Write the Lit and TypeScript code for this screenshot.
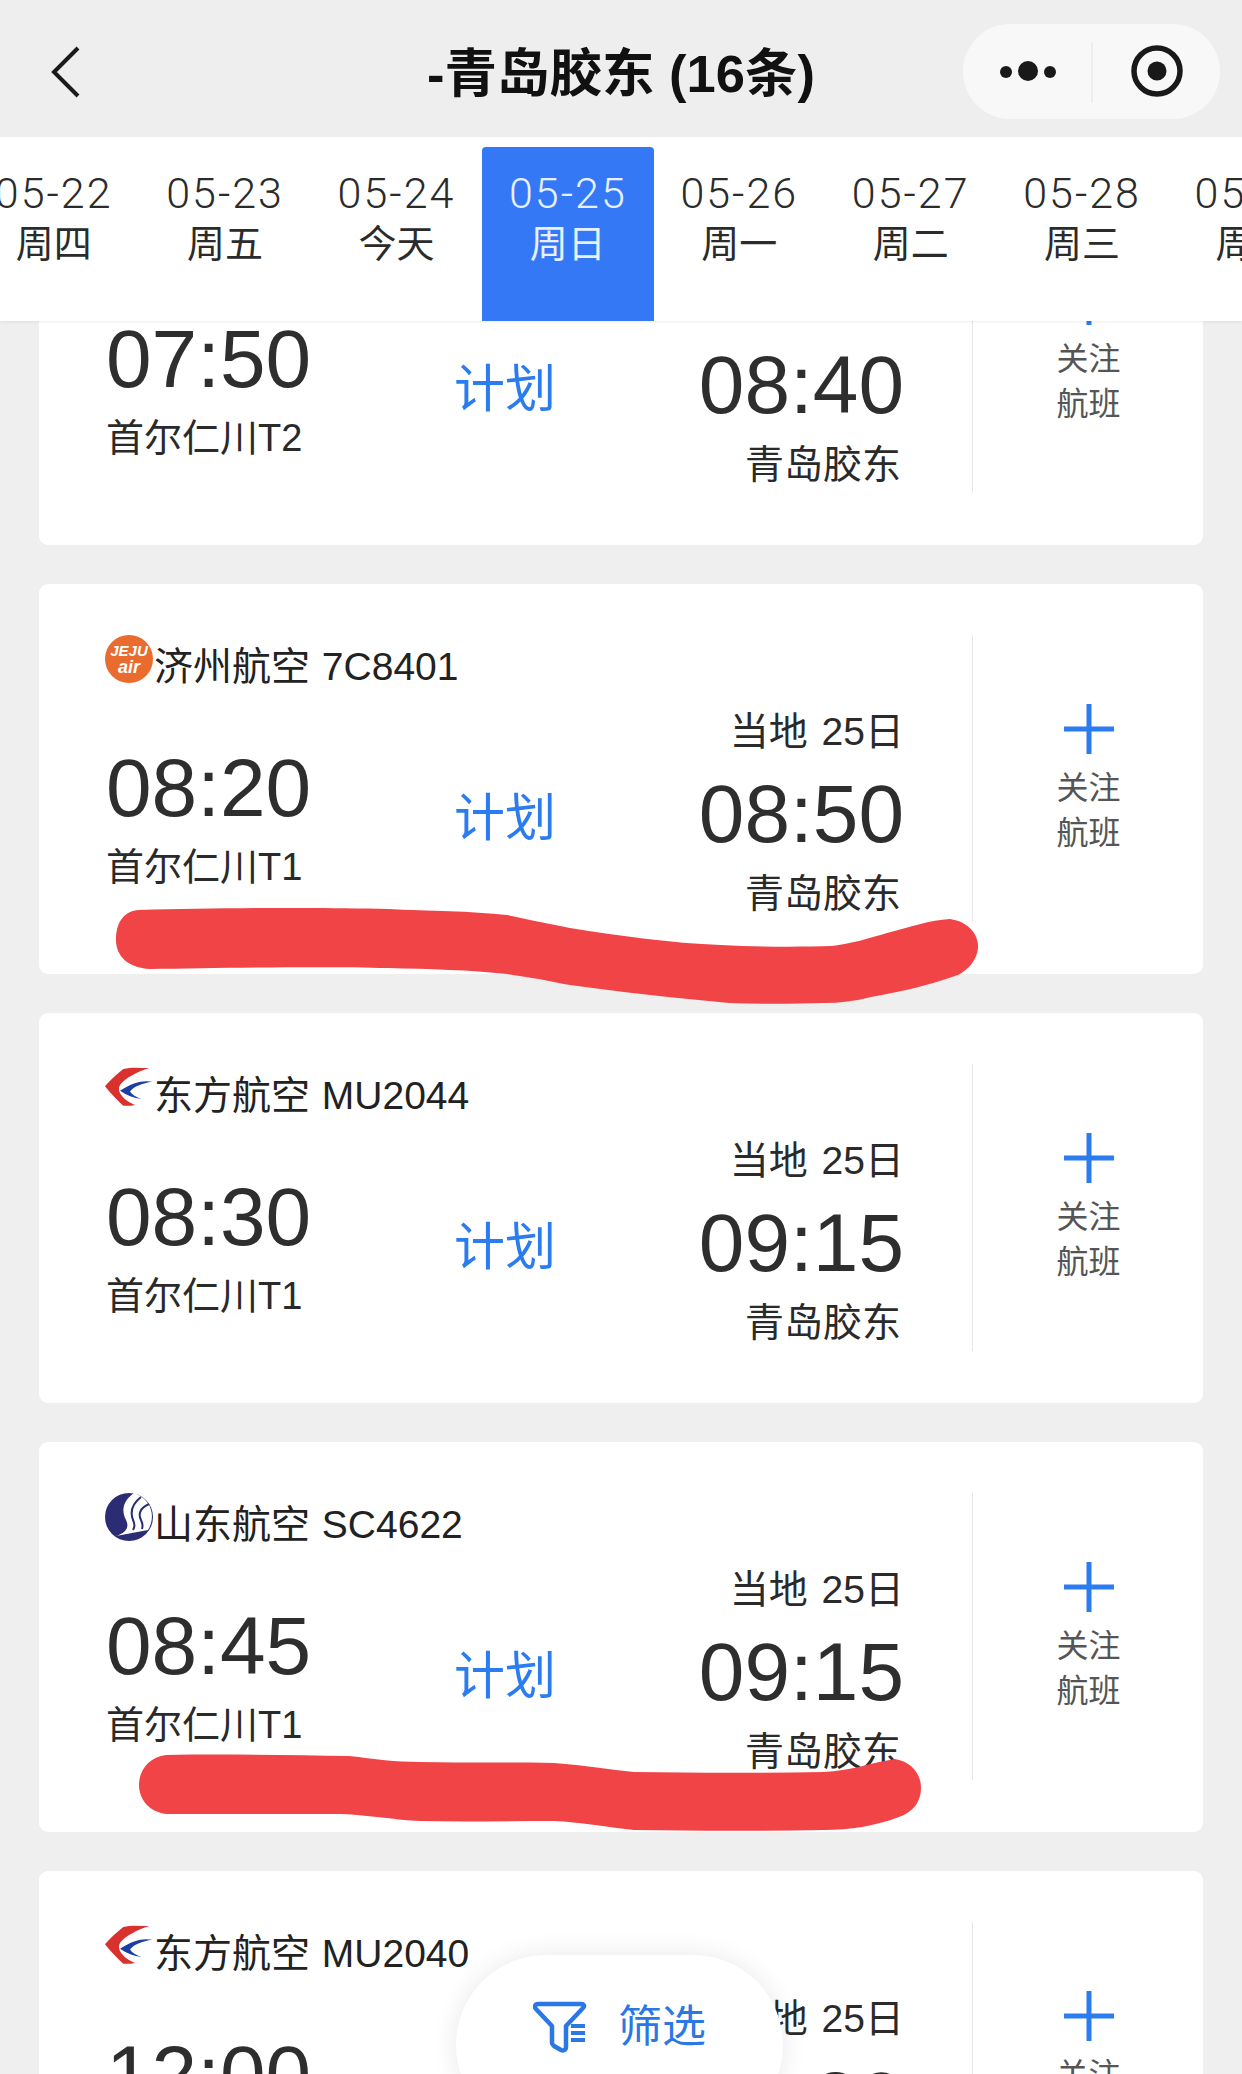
import { LitElement, css, html, svg } from 'lit';
import { customElement } from 'lit/decorators.js';

type Flight = {
	logo: string;
	airline: string;
	dep: string;
	depPort: string;
	arr: string;
};

const days = [
	['05-22', '周四'],
	['05-23', '周五'],
	['05-24', '今天'],
	['05-25', '周日'],
	['05-26', '周一'],
	['05-27', '周二'],
	['05-28', '周三'],
	['05-29', '周四'],
];

const flights: Flight[] = [
	{ logo: '', airline: '', dep: '07:50', depPort: '首尔仁川T2', arr: '08:40' },
	{ logo: 'jeju', airline: '济州航空 7C8401', dep: '08:20', depPort: '首尔仁川T1', arr: '08:50' },
	{ logo: 'mu', airline: '东方航空 MU2044', dep: '08:30', depPort: '首尔仁川T1', arr: '09:15' },
	{ logo: 'sc', airline: '山东航空 SC4622', dep: '08:45', depPort: '首尔仁川T1', arr: '09:15' },
	{ logo: 'mu', airline: '东方航空 MU2040', dep: '12:00', depPort: '首尔仁川T1', arr: '12:30' },
];

const logos: Record<string, unknown> = {
	jeju: svg`
		<circle cx="24" cy="24" r="24" fill="#e96b2d"></circle>
		<text x="24" y="21" text-anchor="middle" font-family="Liberation Sans" font-size="15" font-weight="700" font-style="italic" fill="#fff">JEJU</text>
		<text x="24" y="38" text-anchor="middle" font-family="Liberation Sans" font-size="18" font-weight="700" font-style="italic" fill="#fff">air</text>`,
	mu: svg`
		<path d="M44.3 4 C35 4 26 3 18.3 5 C12 10 5 16 0 22.3 C5 29 12 36 18.3 41.7 C22 42 26 42 30 41 C24 38 20 36 17 32 C14 28 13 25 15 21 C20 14 32 8 44.3 4 Z" fill="#d9322e"></path>
		<path d="M47.7 17.7 C38 16 28 18 15 26.7 C21 31 29 34 36.7 35 C31 33 27 31 25 27.5 C28 23 37 19 47.7 17.7 Z" fill="#1d3fa5"></path>`,
	sc: svg`
		<circle cx="24" cy="24" r="24" fill="#2b2c73"></circle>
		<path d="M29 0 C18 8 16 17 21 27 C25 35 20 40 11 43 L43 37 C50 26 49 7 29 0 Z" fill="#fff"></path>
		<path d="M36 4 C27 11 25 19 28 27 C30 31 30 34 28 37 M44 11 C35 15 33 21 36 27 C38 31 38 33 37 36" fill="none" stroke="#2b2c73" stroke-width="2"></path>`,
};

@customElement('app-root')
export class AppRoot extends LitElement {
	static styles = css`
		:host {
			display: block;
			position: relative;
			width: 1242px;
			height: 2074px;
			overflow: hidden;
			background: #efefef;
			color: #222;
			font-family: "Liberation Sans", "Noto Sans CJK SC", sans-serif;
		}

		.top {
			position: relative;
			z-index: 2;
		}

		.nav {
			display: flex;
			align-items: center;
			justify-content: center;
			position: relative;
			height: 137px;
			background: #efeeef;
		}

		.back {
			position: absolute;
			left: 50px;
			top: 45px;
		}

		.title {
			font-size: 52.5px;
			font-weight: 700;
			color: #111;
			margin-top: 1px;
		}

		.capsule {
			position: absolute;
			left: 963px;
			top: 24px;
		}

		.tabs {
			display: flex;
			height: 174px;
			padding-top: 10px;
			background: #fff;
			overflow: hidden;
			box-shadow: 0 1px 3px rgba(0, 0, 0, 0.08);
		}

		.tab {
			flex: 0 0 171.4px;
			display: flex;
			flex-direction: column;
			align-items: center;
			padding-top: 21px;
			color: #2b2b2b;
			box-sizing: border-box;
		}

		.tab:first-child {
			margin-left: -32px;
		}

		.tab.on {
			background: #3478f6;
			color: #e8f0ff;
			border-radius: 4px 4px 0 0;
		}

		.date {
			font-family: Roboto, sans-serif;
			font-size: 43px;
			font-weight: 300;
			line-height: 50px;
			letter-spacing: 2px;
		}

		.week {
			font-size: 38px;
			line-height: 50px;
			margin-top: 1px;
		}

		.list {
			display: flex;
			flex-direction: column;
			gap: 39px;
			margin: -166px 39px 0;
		}

		.card {
			display: flex;
			height: 390px;
			box-sizing: border-box;
			padding-top: 51px;
			background: #fff;
			border-radius: 9px;
		}

		.main {
			flex: 0 0 934px;
			box-sizing: border-box;
			height: 287px;
			padding: 0 68px 0 67px;
			border-right: 1px solid #e6e6e6;
		}

		.airline {
			display: flex;
			align-items: flex-start;
			height: 48px;
			font-size: 39px;
			line-height: 46px;
			color: #222;
			white-space: nowrap;
			word-spacing: 1px;
		}

		.airline svg {
			flex: none;
			margin-left: -1px;
			margin-right: 1px;
		}

		.airline span {
			margin-top: 9px;
		}

		.route {
			display: flex;
			margin-top: 10px;
		}

		.dep {
			flex: 0 0 348px;
			padding-top: 55px;
		}

		.time {
			font-size: 82px;
			line-height: 80px;
			color: #2e2e2e;
		}

		.port {
			font-size: 38px;
			line-height: 46px;
			color: #2a2a2a;
			white-space: nowrap;
		}

		.dep .port {
			margin-top: 16px;
		}

		.status {
			font-size: 51px;
			line-height: 60px;
			color: #2b7cf0;
			margin-top: 96px;
		}

		.arr {
			margin-left: auto;
			padding-top: 16px;
			text-align: right;
		}

		.arr .time {
			margin-top: 19px;
		}

		.arr .port {
			font-size: 39px;
			word-spacing: 3px;
		}

		.arr .time + .port {
			margin-top: 17px;
			padding-right: 3px;
		}

		.follow {
			flex: 1;
			display: flex;
			flex-direction: column;
			align-items: center;
			padding: 69px 0 0 1px;
			font-size: 32px;
			line-height: 45px;
			color: #555;
		}

		.follow svg {
			margin-bottom: 12px;
		}

		.marks {
			position: absolute;
			left: 0;
			top: 0;
			z-index: 1;
			pointer-events: none;
		}

		.filter {
			position: absolute;
			z-index: 3;
			left: 456px;
			top: 1955px;
			width: 327px;
			height: 180px;
			box-sizing: border-box;
			display: flex;
			align-items: flex-start;
			gap: 31px;
			padding: 46px 0 0 77px;
			background: #fff;
			border-radius: 90px;
			box-shadow: 0 0 26px rgba(0, 0, 0, 0.09);
			font-size: 44px;
			line-height: 52px;
			color: #2b78e4;
		}
	`;

	private flightCard(f: Flight) {
		return html`
			<div class="card">
				<div class="main">
					<div class="airline">
						${f.logo ? html`<svg width="48" height="48" viewBox="0 0 48 48">${logos[f.logo]}</svg>` : ''}
						<span>${f.airline}</span>
					</div>
					<div class="route">
						<div class="dep">
							<div class="time">${f.dep}</div>
							<div class="port">${f.depPort}</div>
						</div>
						<div class="status">计划</div>
						<div class="arr">
							<div class="port">当地 25日</div>
							<div class="time">${f.arr}</div>
							<div class="port">青岛胶东</div>
						</div>
					</div>
				</div>
				<div class="follow">
					<svg width="50" height="50" viewBox="0 0 50 50">
						<path d="M25 0V50M0 25H50" stroke="#2b7cf0" stroke-width="5" fill="none"></path>
					</svg>
					<span>关注</span>
					<span>航班</span>
				</div>
			</div>
		`;
	}

	render() {
		return html`
			<div class="top">
				<div class="nav">
					<svg class="back" width="32" height="54" viewBox="0 0 32 54">
						<path d="M28 3L4 27L28 51" fill="none" stroke="#1a1a1a" stroke-width="4"></path>
					</svg>
					<div class="title">-青岛胶东 (16条)</div>
					<svg class="capsule" width="257" height="95" viewBox="0 0 257 95">
						<rect width="257" height="95" rx="47.5" fill="#f8f8f9"></rect>
						<path d="M129 18V79" stroke="#e2e2e2" stroke-width="1"></path>
						<circle cx="43" cy="48" r="6" fill="#191919"></circle>
						<circle cx="65" cy="47" r="10" fill="#191919"></circle>
						<circle cx="87" cy="48" r="6" fill="#191919"></circle>
						<circle cx="194" cy="47" r="23" fill="none" stroke="#191919" stroke-width="5.5"></circle>
						<circle cx="194" cy="47" r="9.5" fill="#191919"></circle>
					</svg>
				</div>
				<div class="tabs">
					${days.map(([d, w]) => html`
						<div class="tab ${d === '05-25' ? 'on' : ''}">
							<span class="date">${d}</span>
							<span class="week">${w}</span>
						</div>
					`)}
				</div>
			</div>
			<div class="list">
				${flights.map((f) => this.flightCard(f))}
			</div>
			<svg class="marks" width="1242" height="2074" viewBox="0 0 1242 2074">
				<path fill="#f04447" d="M139 910 C220 908 320 907 388 909 C430 911 470 911 507 915 C530 920 550 924 570 928 C620 936 670 943 721 945 C760 947 800 947 832 946 C850 944 870 938 887 933 C910 927 930 920 950 919 C970 922 979 936 978 948 C977 960 968 970 958 975 C930 985 900 992 871 997 C855 1001 840 1003 824 1003 C790 1004 760 1004 729 1003 C675 998 620 992 570 985 C550 981 530 977 507 974 C470 970 430 969 388 968 C320 966 220 968 150 969 C128 968 116 956 116 940 C116 922 124 911 139 910 Z"></path>
				<path fill="#f04447" d="M166 1755 C220 1754 290 1755 349 1756 C375 1759 395 1762 420 1762 C470 1763 510 1762 554 1763 C585 1765 610 1770 634 1772 C700 1773 760 1773 824 1772 C850 1771 870 1763 895 1759 C912 1762 921 1774 921 1788 C921 1802 913 1812 899 1817 C875 1826 850 1830 824 1830 C760 1831 700 1831 634 1830 C605 1827 580 1822 554 1821 C510 1821 465 1822 420 1821 C395 1820 370 1815 341 1814 C285 1814 225 1814 166 1814 C150 1812 139 1800 139 1785 C139 1769 150 1757 166 1755 Z"></path>
			</svg>
			<div class="filter">
				<svg width="54" height="52" viewBox="0 0 54 52">
					<path d="M5 3H48C51 3 52 5 50 7L33 25V46C33 49 30 50 28 49L21 45C20 44 19 43 19 42V25L3 8C1 6 2 3 5 3Z" fill="none" stroke="#2b78e4" stroke-width="4.5" stroke-linejoin="round"></path>
					<path d="M38 25H52M38 32H52M38 39H52" stroke="#2b78e4" stroke-width="4" fill="none"></path>
				</svg>
				<span>筛选</span>
			</div>
		`;
	}
}
